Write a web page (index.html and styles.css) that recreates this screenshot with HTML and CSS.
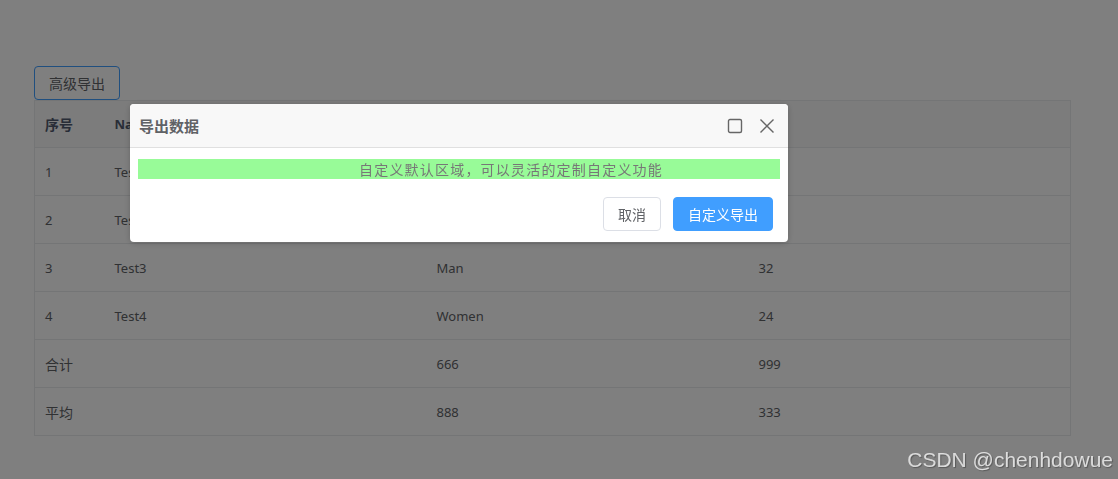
FILE: index.html
```html
<!DOCTYPE html>
<html lang="zh-CN">
<head>
    <meta charset="UTF-8">
    <title>导出数据</title>
    <link rel="stylesheet" href="styles.css">
</head>
<body>
    <div class="page">
        <div class="toolbar">
            <button class="btn-outline">高级导出</button>
        </div>

        <table class="grid">
            <colgroup>
                <col class="col-seq">
                <col>
                <col>
                <col>
            </colgroup>
            <thead>
                <tr>
                    <th class="cjk">序号</th>
                    <th>Name</th>
                    <th>Sex</th>
                    <th>Age</th>
                </tr>
            </thead>
            <tbody>
                <tr><td>1</td><td>Test1</td><td>Man</td><td>28</td></tr>
                <tr><td>2</td><td>Test2</td><td>Women</td><td>22</td></tr>
                <tr><td>3</td><td>Test3</td><td>Man</td><td>32</td></tr>
                <tr><td>4</td><td>Test4</td><td>Women</td><td>24</td></tr>
            </tbody>
            <tfoot>
                <tr><td class="cjk" colspan="2">合计</td><td>666</td><td>999</td></tr>
                <tr><td class="cjk" colspan="2">平均</td><td>888</td><td>333</td></tr>
            </tfoot>
        </table>
    </div>

    <div class="mask"></div>

    <div class="modal">
        <div class="modal-header">
            <span class="modal-title">导出数据</span>
            <div class="modal-actions">
                <svg class="icon" width="16" height="16" viewBox="0 0 16 16">
                    <rect x="1.5" y="1.5" width="13" height="13" rx="1.5" fill="none" stroke="currentColor" stroke-width="1.4"/>
                </svg>
                <svg class="icon" width="16" height="16" viewBox="0 0 16 16">
                    <path d="M1.5 1.5 L14.5 14.5 M14.5 1.5 L1.5 14.5" fill="none" stroke="currentColor" stroke-width="1.4"/>
                </svg>
            </div>
        </div>
        <div class="modal-body">
            <div class="custom-area">自定义默认区域，可以灵活的定制自定义功能</div>
        </div>
        <div class="modal-footer">
            <button class="btn">取消</button>
            <button class="btn btn-primary">自定义导出</button>
        </div>
    </div>

    <div class="watermark">CSDN @chenhdowue</div>
</body>
</html>
```

FILE: styles.css
```css
body {
    margin: 0;
    background: #fff;
    font-family: "Noto Sans", "Noto Sans CJK SC", sans-serif;
    font-size: 13px;
    color: #606266;
}

.page {
    padding: 66px 47px 0 34px;
}

.toolbar {
    display: flex;
}

.btn-outline {
    height: 34px;
    padding: 0 14px;
    font-family: "Noto Sans CJK SC", sans-serif;
    font-size: 14px;
    color: #606266;
    background: #fff;
    border: 1px solid #409eff;
    border-radius: 4px;
}

.grid {
    width: 100%;
    table-layout: fixed;
    border-collapse: collapse;
    border: 1px solid #e8eaec;
}

.grid .col-seq {
    width: 70px;
}

.grid th,
.grid td {
    height: 47px;
    padding: 0 10px;
    text-align: left;
    border-bottom: 1px solid #e8eaec;
}

.grid th {
    height: 46px;
    background: #f8f8f9;
    font-weight: 700;
    color: #515a6e;
}

.grid .cjk {
    font-family: "Noto Sans CJK SC", sans-serif;
    font-size: 14px;
}

.mask {
    position: fixed;
    inset: 0;
    background: rgba(0, 0, 0, 0.5);
}

.modal {
    position: fixed;
    left: 130px;
    top: 104px;
    width: 658px;
    background: #fff;
    border-radius: 4px;
    box-shadow: 0 1px 6px rgba(0, 0, 0, 0.2);
    overflow: hidden;
}

.modal-header {
    display: flex;
    align-items: center;
    justify-content: space-between;
    height: 43px;
    padding: 0 13px 0 9px;
    background: #f8f8f8;
    border-bottom: 1px solid #e0e0e0;
}

.modal-title {
    font-family: "Noto Sans CJK SC", sans-serif;
    font-size: 15px;
    font-weight: 700;
    color: #606266;
}

.modal-actions {
    display: flex;
    gap: 16px;
    color: #666;
}

.modal-body {
    padding: 11px 8px 0;
}

.custom-area {
    height: 20px;
    padding-left: 104px;
    line-height: 20px;
    text-align: center;
    background: #98fb98;
    font-family: "Noto Sans CJK SC", sans-serif;
    font-size: 14px;
    letter-spacing: 1.2px;
    color: #777;
}

.modal-footer {
    display: flex;
    justify-content: flex-end;
    gap: 12px;
    padding: 18px 15px 11px;
}

.btn {
    height: 34px;
    padding: 0 14px;
    font-family: "Noto Sans CJK SC", sans-serif;
    font-size: 14px;
    color: #606266;
    background: #fff;
    border: 1px solid #dcdfe6;
    border-radius: 4px;
}

.btn-primary {
    color: #fff;
    background: #409eff;
    border-color: #409eff;
}

.watermark {
    position: fixed;
    right: 5px;
    bottom: 7px;
    font-family: "Liberation Sans", Arial, sans-serif;
    font-size: 21px;
    color: rgba(255, 255, 255, 0.75);
    text-shadow: 1px 1px 1px rgba(0, 0, 0, 0.3);
}
```
